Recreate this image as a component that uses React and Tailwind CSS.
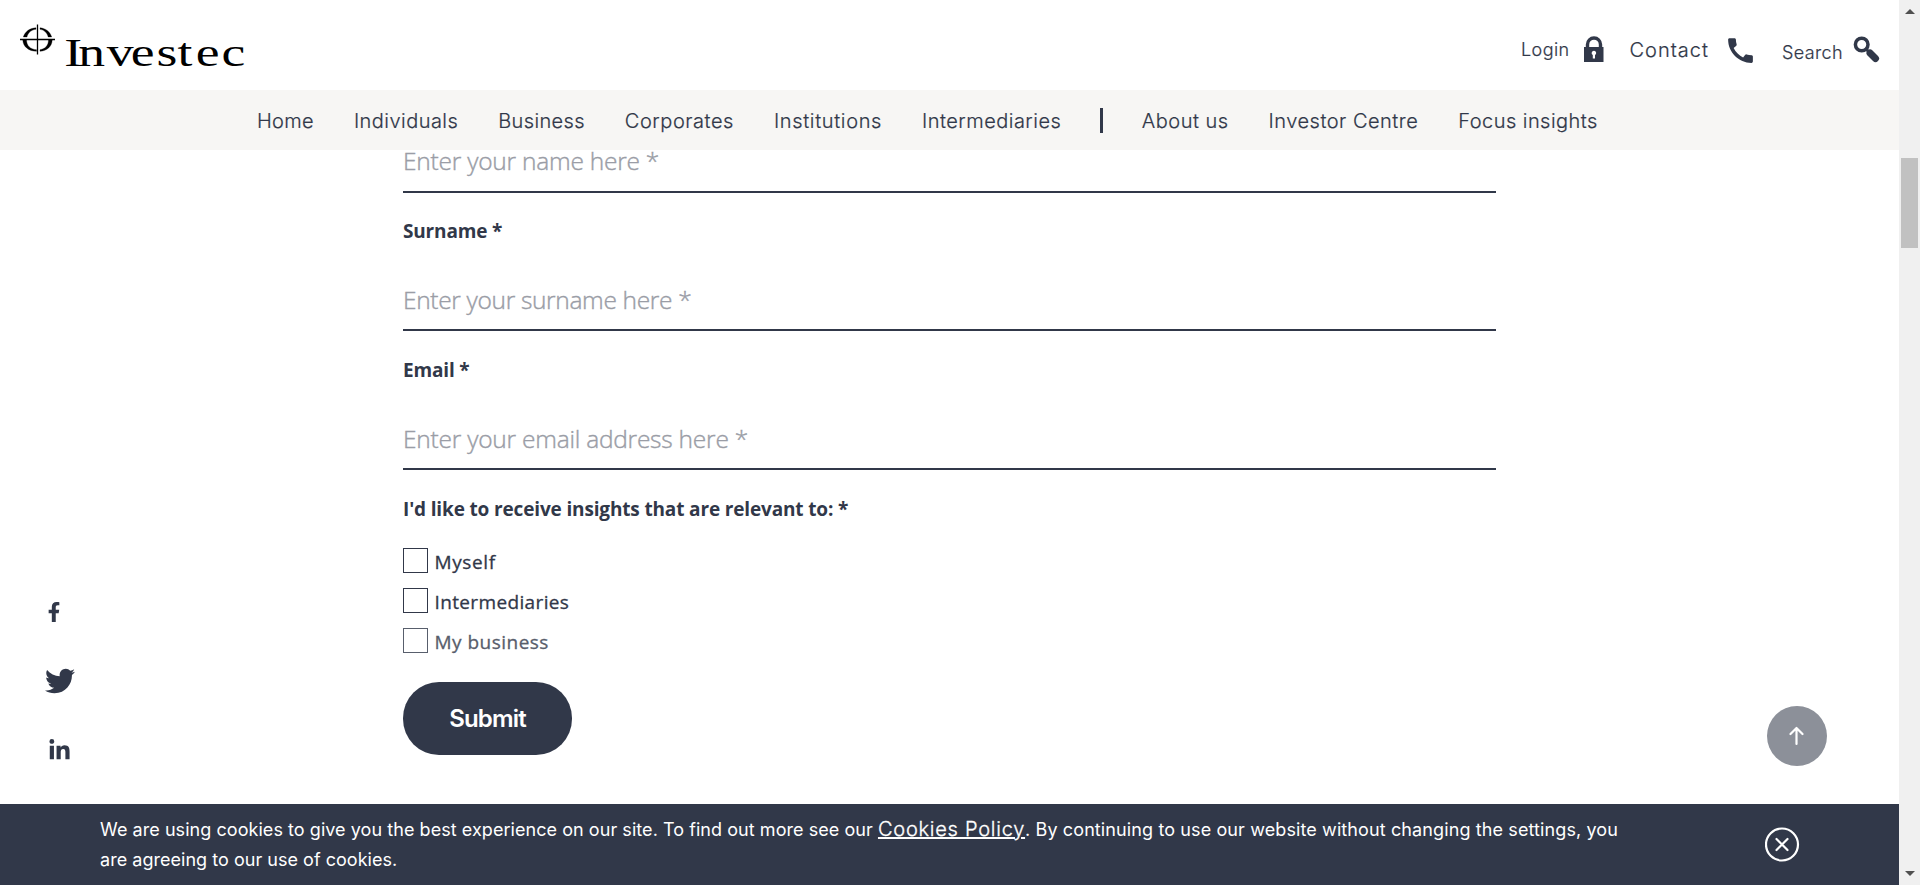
import { MdCall } from "react-icons/md";
import { FaFacebookF, FaTwitter, FaLinkedinIn } from "react-icons/fa";

const NAV = [
  ["Home", "tracking-[0.3px]"],
  ["Individuals", "tracking-[0.46px]"],
  ["Business", "tracking-[0.35px]"],
  ["Corporates", "tracking-[0.55px]"],
  ["Institutions", "tracking-[0.65px]"],
  ["Intermediaries", "tracking-[0.48px]"],
];
const NAV_RIGHT = [
  ["About us", "-ml-[1.5px] tracking-[0.5px]"],
  ["Investor Centre", "tracking-[0.5px]"],
  ["Focus insights", "tracking-[0.46px]"],
];
const OPTIONS = [
  { name: "Myself", text: "tracking-[0.6px]", box: "border-[#313849]" },
  { name: "Intermediaries", text: "tracking-[0.36px]", box: "border-[#313849]" },
  { name: "My business", text: "tracking-[0.48px] text-[#585e6c]", box: "border-[#585e6c]" },
];

function Logo() {
  return (
    <svg width="232" height="60" viewBox="0 0 232 60" className="block overflow-visible">
      <g transform="translate(-18 -20)">
        <path d="M20 39.500H55M37.500 24.500V54.500" stroke="#000" strokeWidth="1.300" />
        <path d="M23.300 37C25 31.500 30 28 36 27.800V29.300C31.500 29.800 28 32.500 27 37ZM51.700 37C50 31.500 45.500 28.300 40 27.800V29.300C44 30 47.200 32.500 48.200 37ZM22.800 40H26.500C26.700 45.500 30 49.300 36.500 49.700V51.300C28.500 51.200 23 46.500 22.800 40ZM52.200 40H48.500C48.300 45.500 45.500 48.800 40 49.700V51.300C47 50.800 52 46.500 52.200 40Z" fill="#000" stroke="#000" strokeWidth="0.300" />
      </g>
      <text transform="scale(1.34 1)" x="34.6 45 66.3 84.2 103.4 119 132.6 151.800" y="46" fontSize="40" fontFamily="'Liberation Serif', serif" fill="#000">Investec</text>
    </svg>
  );
}

function Field({ label, placeholder, className, text }) {
  return (
    <div className={"border-b-2 border-[#313849] " + className}>
      <div className="h-7 text-[19px] leading-7 font-bold tracking-[-0.17px]">{label}</div>
      <div className={"mt-[37px] h-9 text-[24.5px] leading-9 font-light text-[#9a9da6] [-webkit-text-stroke:0.4px_#9a9da6] " + text}>{placeholder}</div>
    </div>
  );
}

export default function App() {
  return (
    <div className="flex h-[885px] w-[1920px] overflow-hidden bg-white font-['Inter',sans-serif] text-[#313849]">
      <div className="flex w-[1899px] flex-col">
        <header className="flex h-[90px] shrink-0 justify-between pr-[19px] font-light [-webkit-text-stroke:0.2px_#313849]">
          <div className="pl-[18px] pt-5 [-webkit-text-stroke:0]"><Logo /></div>
          <div className="flex items-start">
            <span className="mt-[37px] text-[18px] leading-[26px] tracking-[0.4px]">Login</span>
            <svg className="ml-[15px] mt-9" width="20" height="27" viewBox="0 0 20 27">
              <path d="M3.500 11V8.500a6.500 6.500 0 0 1 13 0V11" fill="none" stroke="#313849" strokeWidth="3.400" />
              <rect x="0" y="11" width="19.500" height="15" fill="#313849" />
              <path d="M10 14.800a2.300 2.300 0 0 1 1 4.300V22.500H8.800V19.100A2.300 2.300 0 0 1 10 14.800Z" fill="#fff" />
            </svg>
            <span className="ml-[25px] mt-[37px] text-[20px] leading-[26px] tracking-[1px]">Contact</span>
            <MdCall className="ml-[15px] mt-[34px] size-[33px]" />
            <span className="ml-[25px] mt-10 text-[18px] leading-[26px] tracking-[0.4px]">Search</span>
            <svg className="ml-[10px] mt-9" width="27" height="28" viewBox="0 0 27 28">
              <circle cx="8.700" cy="8.500" r="6.300" fill="none" stroke="#313849" strokeWidth="3.500" />
              <path d="M13 13l4 4" stroke="#313849" strokeWidth="3" />
              <path d="M17 17l5.500 5.500" stroke="#313849" strokeWidth="7" strokeLinecap="round" />
            </svg>
          </div>
        </header>
        <nav className="flex h-[60px] shrink-0 items-center gap-10 bg-[#f7f6f4] pl-[257px] text-[20px] font-light [-webkit-text-stroke:0.2px_#313849]">
          {NAV.map(([t, spacing]) => <span key={t} className={"pt-0.5 whitespace-nowrap " + spacing}>{t}</span>)}
          <div className="-ml-px h-[25px] w-[3px] bg-[#313849]" />
          {NAV_RIGHT.map(([t, spacing]) => <span key={t} className={"pt-0.5 whitespace-nowrap " + spacing}>{t}</span>)}
        </nav>
        <main className="flex h-[654px] shrink-0 justify-between">
          <aside className="flex w-[403px] flex-col pl-[45px] pt-[452px]">
            <FaFacebookF className="-ml-px size-5" />
            <FaTwitter className="mt-[44px] size-[30px]" />
            <FaLinkedinIn className="ml-[3px] mt-[43px] size-[23px]" />
          </aside>
          <form className="w-[1093px] font-['Open_Sans',sans-serif]">
            <div className="h-[43px] border-b-2 border-[#313849] text-[24.5px] leading-[21px] font-light tracking-[-0.23px] text-[#9a9da6] [-webkit-text-stroke:0.4px_#9a9da6]">Enter your name here *</div>
            <Field label="Surname *" placeholder="Enter your surname here *" className="h-[138px] pt-6" text="tracking-[-0.33px]" />
            <Field label="Email *" placeholder="Enter your email address here *" className="h-[139px] pt-[25px]" text="tracking-[-0.23px]" />
            <div className="mt-[25px] h-7 text-[19px] leading-7 font-bold tracking-[-0.15px]">I'd like to receive insights that are relevant to: *</div>
            <div className="mt-[25px] flex flex-col gap-[15px] text-[19px] leading-[28px]">
              {OPTIONS.map((o) => (
                <label key={o.name} className="flex h-[25px] gap-[6.5px]">
                  <span className={"size-[25px] border " + o.box} />
                  <span className={"[-webkit-text-stroke:0.3px] " + o.text}>{o.name}</span>
                </label>
              ))}
            </div>
            <button type="button" className="mt-[29px] flex h-[73px] w-[169px] items-center justify-center rounded-[36px] bg-[#313849] font-['Inter',sans-serif] text-[24px] font-semibold tracking-[-0.85px] text-white">Submit</button>
          </form>
          <div className="w-[403px] pl-[271px] pt-[556px]">
            <div className="flex size-[60px] items-center justify-center rounded-full bg-[#8c9099]">
              <svg width="16" height="20" viewBox="0 0 16 20" fill="none" stroke="#fff" strokeWidth="2.2" strokeLinecap="round" strokeLinejoin="round"><path d="M7.500 18V2M1.500 8L7.500 2L13.500 8" /></svg>
            </div>
          </div>
        </main>
        <footer className="flex h-[81px] shrink-0 bg-[#313849] pl-[100px] pt-[11px] text-[18px] leading-[30px] text-white">
          <p className="w-[1665px] whitespace-nowrap">
            <span className="tracking-[0.054px]">We are using cookies to give you the best experience on our site. To find out more see our </span>
            <a className="text-[20px] leading-5 font-light tracking-[0.75px] underline [-webkit-text-stroke:0.3px_#fff]">Cookies Policy</a>
            <span className="tracking-[0.11px]">. By continuing to use our website without changing the settings, you</span><br />
            <span className="tracking-[0.03px]">are agreeing to our use of cookies.</span>
          </p>
          <svg className="mt-[12px]" width="36" height="36" viewBox="0 0 36 36" fill="none" stroke="#fff" strokeWidth="2.2" strokeLinecap="round"><circle cx="17" cy="17.500" r="16" /><path d="M11.500 12L22.500 23M22.500 12L11.500 23" /></svg>
        </footer>
      </div>
      <div className="flex w-[21px] flex-col items-center bg-[#f0f0f0]">
        <svg className="mt-[9px] shrink-0" width="10" height="5"><path d="M0 5L5 0L10 5Z" fill="#505050" /></svg>
        <div className="mt-36 h-[90px] w-[17px] shrink-0 bg-[#c1c1c1]" />
        <svg className="mt-auto mb-[9px] shrink-0" width="10" height="5"><path d="M0 0L5 5L10 0Z" fill="#505050" /></svg>
      </div>
    </div>
  );
}
